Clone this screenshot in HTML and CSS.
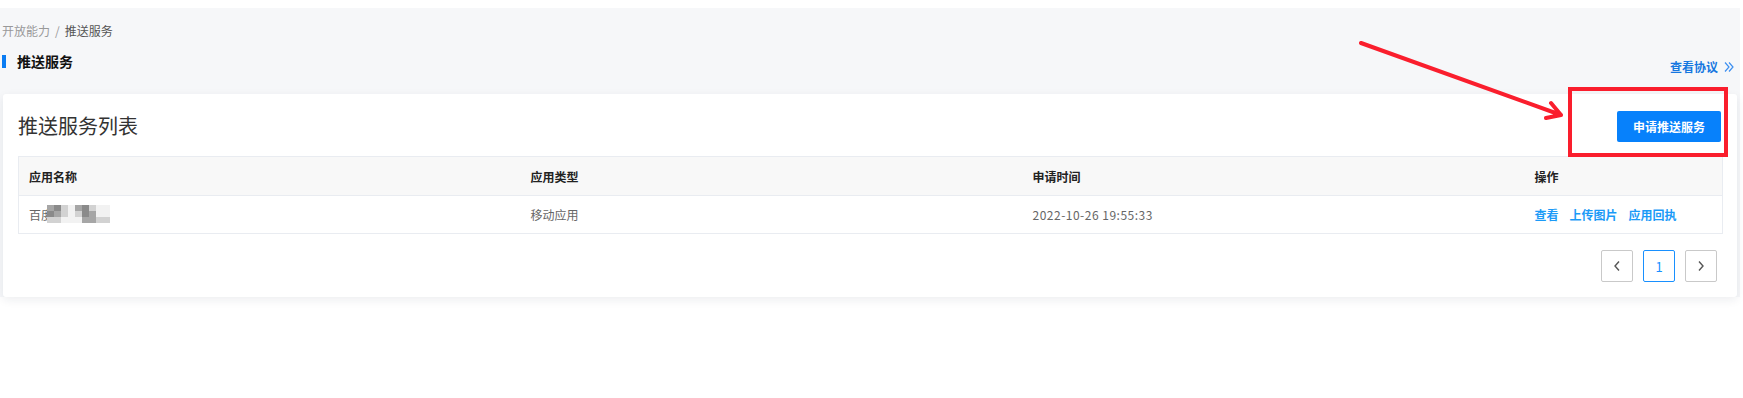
FILE: index.html
```html
<!DOCTYPE html>
<html lang="zh-CN">
<head>
  <meta charset="UTF-8" />
  <meta name="viewport" content="width=device-width, initial-scale=1.0" />
  <title>推送服务</title>
  <link rel="stylesheet" href="styles.css">
</head>
<body>
  <div class="page">
    <div class="top">
      <div class="crumbs"><span class="crumb-root">开放能力</span><span class="sep">/</span><span class="crumb-cur">推送服务</span></div>
      <div class="title-row">
        <h2 class="page-title">推送服务</h2>
        <a class="protocol">查看协议<svg class="dbl" width="10" height="12" viewBox="0 0 10 12"><path d="M1 1.5 L5 6 L1 10.5 M5 1.5 L9 6 L5 10.5" fill="none" stroke="#3d8ff0" stroke-width="1.2"/></svg></a>
      </div>
    </div>
    <div class="card">
      <div class="card-head">
        <h3 class="card-title">推送服务列表</h3>
        <button class="apply-btn">申请推送服务</button>
      </div>
      <table class="list">
        <colgroup><col class="c1"><col class="c2"><col class="c3"><col class="c4"></colgroup>
        <thead>
          <tr><th>应用名称</th><th>应用类型</th><th>申请时间</th><th>操作</th></tr>
        </thead>
        <tbody>
          <tr>
            <td><span class="app-name">百度<span class="mosaic">
              <i class="m2"></i><i class="m1"></i><i class="m3"></i><i class="m4"></i><i class="m2"></i><i class="m1"></i><i class="m3"></i><i class="m4"></i><i class="m4"></i>
              <i class="m1"></i><i class="m2"></i><i class="m3"></i><i class="m4"></i><i class="m3"></i><i class="m1"></i><i class="m2"></i><i class="m4"></i><i class="m4"></i>
              <i class="m3"></i><i class="m3"></i><i class="m4"></i><i class="m4"></i><i class="m4"></i><i class="m2"></i><i class="m2"></i><i class="m3"></i><i class="m3"></i>
            </span></span></td>
            <td>移动应用</td>
            <td><span class="date">2022-10-26 19:55:33</span></td>
            <td class="ops"><a>查看</a><a>上传图片</a><a>应用回执</a></td>
          </tr>
        </tbody>
      </table>
      <div class="pager">
        <span class="pg"><svg width="10" height="12" viewBox="0 0 10 12"><path d="M7 1.5 L3 6 L7 10.5" fill="none" stroke="#555" stroke-width="1.4"/></svg></span>
        <span class="pg active">1</span>
        <span class="pg"><svg width="10" height="12" viewBox="0 0 10 12"><path d="M3 1.5 L7 6 L3 10.5" fill="none" stroke="#555" stroke-width="1.4"/></svg></span>
      </div>
    </div>
  </div>

  <div class="notes">
    <svg class="arrow" width="1743" height="398" viewBox="0 0 1743 398">
      <path d="M1361 43 L1561 115 M1561 115 L1551 103 M1561 115 L1546 118" fill="none" stroke="#fa1e2d" stroke-width="4" stroke-linecap="round" stroke-linejoin="round"/>
    </svg>
    <div class="focus-box"></div>
  </div>
</body>
</html>
```

FILE: styles.css
```css
* { margin: 0; padding: 0; box-sizing: border-box; }
html, body {
  width: 100%; height: 100%; overflow: hidden;
  background: #fff;
  font-family: "Noto Sans CJK SC", "Noto Sans", sans-serif;
  color: #333;
}
.page {
  margin-top: 8px; width: 1740px;
  background: #f6f7f9;
}

.top { padding: 14px 6px 18px 2px; }
.crumbs { font-size: 12px; line-height: 18px; color: #999; }
.crumbs .sep { margin: 0 5px; }
.crumbs .crumb-cur { color: #555; }

.title-row { margin-top: 12px; display: flex; justify-content: space-between; align-items: flex-start; }
.page-title {
  position: relative; padding-left: 15px;
  font-size: 14px; line-height: 18px; font-weight: 700; color: #111;
}
.page-title::before {
  content: ""; position: absolute; left: 0; top: 3px;
  width: 4px; height: 13px; background: #0a7cf3;
}
.protocol {
  margin-top: 6px; font-size: 12px; line-height: 18px; font-weight: 700;
  color: #1677e0; cursor: pointer;
  display: flex; align-items: center;
}
.protocol .dbl { margin-left: 6px; }

.card {
  margin-left: 3px; width: 1734px;
  background: #fff; padding: 15px;
  border-radius: 3px;
  box-shadow: 0 3px 10px rgba(30,40,60,0.08);
}
.card-head { display: flex; justify-content: space-between; align-items: center; height: 34px; padding-right: 1px; }
.card-title { font-size: 20px; font-weight: 400; color: #333; line-height: 34px; }
.apply-btn {
  width: 104px; height: 31px; border: none; border-radius: 2px;
  background: #0781fb; color: #fff;
  font-family: inherit; font-size: 12px; font-weight: 700; cursor: pointer;
}

.list {
  margin-top: 13px; width: 1704px; table-layout: fixed;
  border-collapse: collapse; font-size: 12px;
}
.list .c1, .list .c2, .list .c3 { width: 502px; }
.list .c4 { width: 198px; }
.list th, .list td { text-align: left; padding: 0 10px; border: 1px solid #e9ecf1; border-left: none; border-right: none; }
.list tr > :first-child { border-left: 1px solid #e9ecf1; }
.list tr > :last-child { border-right: 1px solid #e9ecf1; }
.list th { height: 39px; background: #f8f8f8; font-weight: 700; color: #222; }
.list td { height: 38px; color: #666; }
.date { letter-spacing: 0.5px; }
.ops a { color: #1b9af7; font-weight: 700; margin-right: 11px; cursor: pointer; }

.app-name { position: relative; display: inline-block; }
.mosaic {
  position: absolute; left: 18px; top: -1px;
  display: grid; grid-template-columns: repeat(9, 7px); grid-auto-rows: 6px;
}
.mosaic i { display: block; }
.mosaic .m1 { background: #8a8a8a; }
.mosaic .m2 { background: #a6a6a6; }
.mosaic .m3 { background: #d2d2d2; }
.mosaic .m4 { background: #f2f2f2; }

.pager { margin-top: 16px; padding-right: 5px; display: flex; justify-content: flex-end; gap: 10px; }
.pg {
  width: 32px; height: 32px; border: 1px solid #c9c9c9; border-radius: 2px;
  display: flex; align-items: center; justify-content: center;
  font-size: 13px; color: #444; background: #fff;
}
.pg.active { border-color: #1890ff; color: #1890ff; }

.notes { position: absolute; left: 0; top: 0; pointer-events: none; }
.arrow { position: absolute; left: 0; top: 0; }
.focus-box {
  position: absolute; left: 1568px; top: 87px;
  width: 160px; height: 70px; border: 4px solid #fa1e2d;
}
```
